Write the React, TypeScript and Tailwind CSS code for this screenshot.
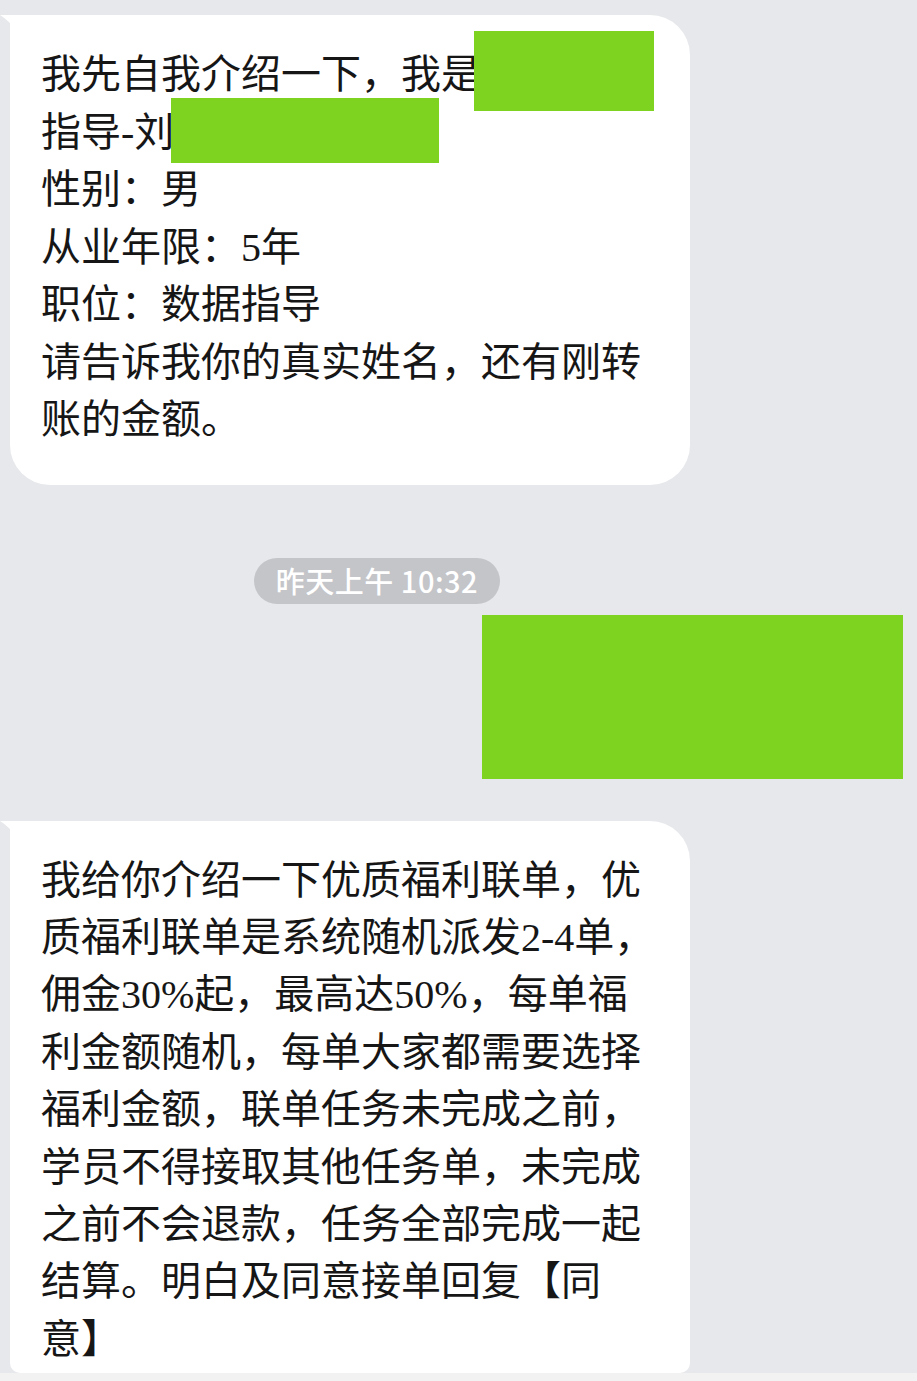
const FONT = "font-['Liberation_Serif','Noto_Sans_CJK_SC',serif]";

const intro = [
  "我先自我介绍一下，我是",
  "指导-刘",
  "性别：男",
  "从业年限：5年",
  "职位：数据指导",
  "请告诉我你的真实姓名，还有刚转",
  "账的金额。",
];

const rules = [
  "我给你介绍一下优质福利联单，优",
  "质福利联单是系统随机派发2-4单，",
  "佣金30%起，最高达50%，每单福",
  "利金额随机，每单大家都需要选择",
  "福利金额，联单任务未完成之前，",
  "学员不得接取其他任务单，未完成",
  "之前不会退款，任务全部完成一起",
  "结算。明白及同意接单回复【同",
  "意】",
];

function Tail() {
  return (
    <svg
      className="absolute left-[-10px] top-0"
      width="24"
      height="30"
      viewBox="0 0 24 30"
      aria-hidden="true"
    >
      <path d="M0 0 H24 V30 C20 18 12 8 0 0 Z" fill="#ffffff" />
    </svg>
  );
}

export default function App() {
  return (
    <div className="flex min-h-screen w-full flex-col bg-[#e7e8eb]">
      {/* incoming message 1 */}
      <div className="relative ml-[10px] mt-[15px] w-[680px] rounded-[40px] rounded-tl-none bg-white pb-[36px] pl-[31px] pt-[31px] text-[40px] leading-[57.5px] text-[#161616]">
        <Tail />
        <div className={FONT}>
          {intro.map((line) => (
            <div key={line} className="whitespace-nowrap">
              {line}
            </div>
          ))}
        </div>
        <div className="absolute left-[464px] top-[16px] h-[80px] w-[180px] bg-[#7ed321]" />
        <div className="absolute left-[161px] top-[83px] h-[65px] w-[268px] bg-[#7ed321]" />
      </div>

      {/* timestamp */}
      <div className="mt-[73px] flex pl-[254px]">
        <div className="flex h-[46px] w-[246px] items-center justify-center rounded-full bg-[#c4c5c9] font-['Noto_Sans_CJK_SC',sans-serif] text-[29px] font-medium tracking-[0.5px] text-white">
          昨天上午 10:32
        </div>
      </div>

      {/* outgoing message (redacted) */}
      <div className="mt-[11px] flex justify-end pr-[14px]">
        <div className="h-[164px] w-[421px] bg-[#7ed321]" />
      </div>

      {/* incoming message 2 */}
      <div className="relative ml-[10px] mt-[42px] w-[680px] rounded-[40px] rounded-b-[10px] rounded-tl-none bg-white pb-[5px] pl-[31px] pt-[31px] text-[40px] leading-[57.4px] text-[#161616]">
        <Tail />
        <div className={FONT}>
          {rules.map((line) => (
            <div key={line} className="whitespace-nowrap">
              {line}
            </div>
          ))}
        </div>
      </div>
      <div className="h-[8px] bg-[#f2f2f3]" />
    </div>
  );
}
